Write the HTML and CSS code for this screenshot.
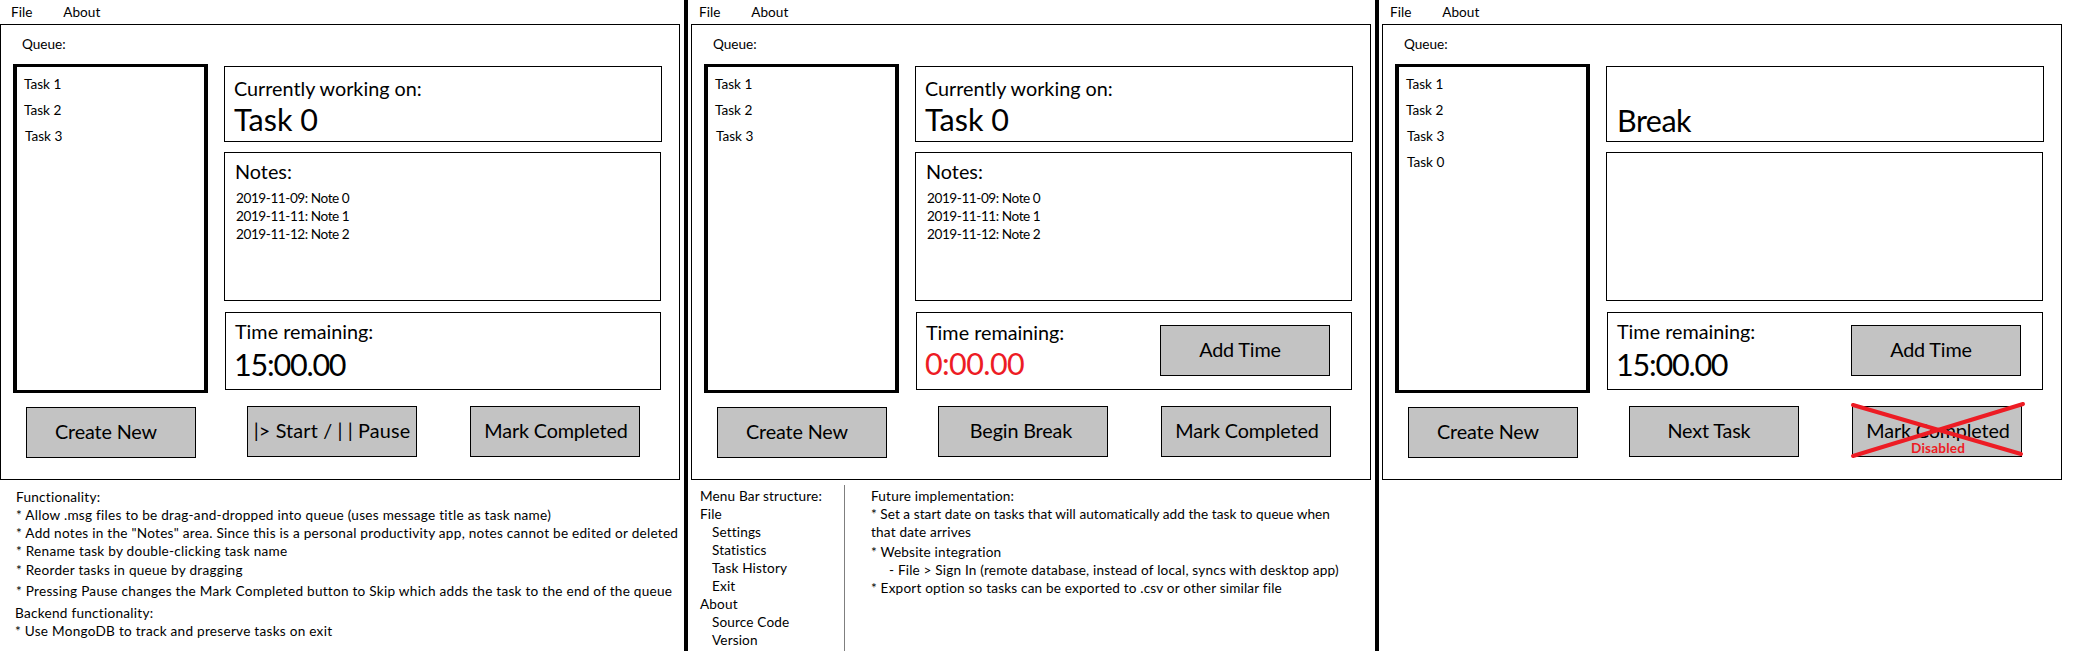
FILE: index.html
```html
<!DOCTYPE html>
<html>

<head>
    <title>Task Queue Mockups</title>
    <link rel="stylesheet" href="styles.css">
</head>

<body>
    <div class="screens">
        <!-- Running a task -->
        <div class="screen first">
            <div class="menu"><span>File</span><span class="about">About</span></div>
            <div class="frame">
                <div class="queue-label">Queue:</div>
                <div class="main">
                    <div class="queue">
                        <div class="task">Task 1</div>
                        <div class="task">Task 2</div>
                        <div class="task nudge">Task 3</div>
                    </div>
                    <div class="stack">
                        <div class="current">
                            <div class="heading">Currently working on:</div>
                            <div class="big">Task 0</div>
                        </div>
                        <div class="notes">
                            <div class="heading">Notes:</div>
                            <div class="note-list">
                                <div>2019-11-09: Note 0</div>
                                <div>2019-11-11: Note 1</div>
                                <div>2019-11-12: Note 2</div>
                            </div>
                        </div>
                        <div class="time">
                            <div>
                                <div class="heading">Time remaining:</div>
                                <div class="big digits">15:00.00</div>
                            </div>
                        </div>
                    </div>
                </div>
                <div class="actions">
                    <div class="btn create">Create New</div>
                    <div class="btn middle start">|&gt; Start / | | Pause</div>
                    <div class="btn last">Mark Completed</div>
                </div>
            </div>
            <div class="foot-one">
                <div>Functionality:</div>
                <div>* Allow .msg files to be drag-and-dropped into queue (uses message title as task name)</div>
                <div>* Add notes in the "Notes" area. Since this is a personal productivity app, notes cannot be edited or deleted</div>
                <div>* Rename task by double-clicking task name</div>
                <div class="gap1">* Reorder tasks in queue by dragging</div>
                <div class="gap3">* Pressing Pause changes the Mark Completed button to Skip which adds the task to the end of the queue</div>
                <div class="gap4 back">Backend functionality:</div>
                <div class="back">* Use MongoDB to track and preserve tasks on exit</div>
            </div>
        </div>

        <!-- Timer ran out -->
        <div class="screen">
            <div class="menu"><span>File</span><span class="about">About</span></div>
            <div class="frame">
                <div class="queue-label">Queue:</div>
                <div class="main">
                    <div class="queue">
                        <div class="task">Task 1</div>
                        <div class="task">Task 2</div>
                        <div class="task nudge">Task 3</div>
                    </div>
                    <div class="stack">
                        <div class="current">
                            <div class="heading">Currently working on:</div>
                            <div class="big">Task 0</div>
                        </div>
                        <div class="notes">
                            <div class="heading">Notes:</div>
                            <div class="note-list">
                                <div>2019-11-09: Note 0</div>
                                <div>2019-11-11: Note 1</div>
                                <div>2019-11-12: Note 2</div>
                            </div>
                        </div>
                        <div class="time">
                            <div>
                                <div class="heading">Time remaining:</div>
                                <div class="big digits expired">0:00.00</div>
                            </div>
                            <div class="btn add">Add Time</div>
                        </div>
                    </div>
                </div>
                <div class="actions">
                    <div class="btn create">Create New</div>
                    <div class="btn middle begin">Begin Break</div>
                    <div class="btn last">Mark Completed</div>
                </div>
            </div>
            <div class="foot-two">
                <div class="menu-tree">
                    <div>Menu Bar structure:</div>
                    <div>File</div>
                    <div class="sub">Settings</div>
                    <div class="sub">Statistics</div>
                    <div class="sub">Task History</div>
                    <div class="sub">Exit</div>
                    <div>About</div>
                    <div class="sub">Source Code</div>
                    <div class="sub">Version</div>
                </div>
                <div class="future">
                    <div>Future implementation:</div>
                    <div class="tight">* Set a start date on tasks that will automatically add the task to queue when</div>
                    <div>that date arrives</div>
                    <div class="gap2">* Website integration</div>
                    <div class="sub-file">- File &gt; Sign In (remote database, instead of local, syncs with desktop app)</div>
                    <div>* Export option so tasks can be exported to .csv or other similar file</div>
                </div>
            </div>
        </div>

        <!-- On a break -->
        <div class="screen final">
            <div class="menu"><span>File</span><span class="about">About</span></div>
            <div class="frame">
                <div class="queue-label">Queue:</div>
                <div class="main">
                    <div class="queue">
                        <div class="task">Task 1</div>
                        <div class="task">Task 2</div>
                        <div class="task nudge">Task 3</div>
                        <div class="task nudge">Task 0</div>
                    </div>
                    <div class="stack">
                        <div class="current">
                            <div class="heading"></div>
                            <div class="big break">Break</div>
                        </div>
                        <div class="notes"></div>
                        <div class="time">
                            <div>
                                <div class="heading">Time remaining:</div>
                                <div class="big digits">15:00.00</div>
                            </div>
                            <div class="btn add">Add Time</div>
                        </div>
                    </div>
                </div>
                <div class="actions">
                    <div class="btn create">Create New</div>
                    <div class="btn middle next">Next Task</div>
                    <div class="btn last disabled">
                        Mark Completed
                        <span class="disabled-label">Disabled</span>
                        <svg class="cross" width="170" height="51" viewBox="0 0 170 51">
                            <line x1="1" y1="-1" x2="169" y2="48" />
                            <line x1="1" y1="50" x2="171" y2="-2" />
                        </svg>
                    </div>
                </div>
            </div>
        </div>
    </div>
</body>

</html>
```

FILE: styles.css
```css
/* Page */
body {
    margin: 0;
    background: #ffffff;
    color: #000000;
    font-family: Lato, "Open Sans", sans-serif;
    font-size: 13.6px;
    line-height: 18px;
    overflow: hidden;
}

.screens {
    display: flex;
    height: 651px;
}

.screen {
    width: 684px;
    padding-left: 3px;
    border-right: 4px solid #000000;
}

.screen.first {
    padding-left: 0;
}

.screen.final {
    width: 693px;
    border-right: none;
}

/* Menu bar */
.menu {
    height: 24px;
    padding-left: 8px;
    line-height: 24px;
}

.first .menu {
    padding-left: 11px;
}

.about {
    margin-left: 31px;
}

/* Window */
.frame {
    box-sizing: border-box;
    width: 680px;
    height: 456px;
    border: 1px solid #000000;
}

.queue-label {
    padding: 10px 0 11px 21px;
}

.main {
    display: flex;
    align-items: flex-start;
    padding-left: 12px;
}

.queue {
    box-sizing: border-box;
    width: 195px;
    height: 329px;
    padding: 4px 0 0 7px;
    border: 3px solid #000000;
    border-left-width: 4px;
    border-right-width: 4px;
}

.task {
    height: 26px;
    line-height: 26px;
}

.nudge {
    margin-left: 1px;
}

.stack {
    margin: 2px 0 0 16px;
}

.current,
.notes,
.time {
    box-sizing: border-box;
    border: 1px solid #000000;
}

.current {
    width: 438px;
    height: 76px;
    padding: 9px 0 0 9px;
}

.notes {
    width: 437px;
    height: 149px;
    margin-top: 10px;
    padding: 6px 0 0 10px;
}

.time {
    display: flex;
    align-items: center;
    justify-content: space-between;
    width: 436px;
    height: 78px;
    margin: 11px 0 0 1px;
    padding: 0 21px 0 9px;
}

.heading {
    min-height: 24px;
    font-size: 19.8px;
    line-height: 24px;
}

.big {
    font-size: 30.5px;
    line-height: 38px;
}

.digits {
    margin-top: 2px;
    margin-left: -1px;
    letter-spacing: -1.2px;
}

.expired {
    margin-top: 0;
    color: #ed1c24;
    letter-spacing: -0.6px;
}

.break {
    margin: 1px 0 0 1px;
    letter-spacing: -0.5px;
}

.note-list {
    margin-top: 6px;
    margin-left: 1px;
    letter-spacing: -0.44px;
}

/* Buttons */
.actions {
    display: flex;
    align-items: flex-start;
    margin-top: 13px;
    padding-left: 25px;
}

.btn {
    position: relative;
    box-sizing: border-box;
    width: 170px;
    height: 51px;
    border: 1px solid #000000;
    background: #c3c3c3;
    font-size: 19.8px;
    letter-spacing: -0.15px;
    line-height: 47px;
    text-align: center;
    white-space: nowrap;
}

.create {
    margin-top: 1px;
    padding-right: 10px;
    line-height: 46px;
}

.middle {
    margin-left: 51px;
}

.start {
    letter-spacing: 0.15px;
}

.begin {
    padding-right: 4px;
}

.next {
    padding-right: 10px;
}

.last {
    margin-left: 53px;
    padding-left: 2px;
}

.add {
    margin-top: -1px;
    padding-right: 10px;
}

.disabled-label {
    position: absolute;
    left: 58px;
    top: 32px;
    color: #ed1c24;
    font-size: 13.6px;
    font-weight: 700;
    letter-spacing: 0.2px;
    line-height: 18px;
}

.cross {
    position: absolute;
    left: -1px;
    top: -1px;
    overflow: visible;
}

.cross line {
    stroke: #ed1c24;
    stroke-width: 4;
    stroke-linecap: round;
}

/* Notes under the windows */
.foot-one {
    padding: 8px 0 0 16px;
    letter-spacing: 0.26px;
}

.gap1 {
    margin-top: 1px;
}

.gap2 {
    margin-top: 2px;
}

.gap3 {
    margin-top: 3px;
}

.gap4 {
    margin-top: 4px;
}

.back {
    margin-left: -1px;
}

.foot-two {
    display: flex;
    height: 166px;
    margin-top: 5px;
}

.menu-tree {
    box-sizing: border-box;
    width: 154px;
    padding: 2px 0 0 9px;
    border-right: 1px solid #7f7f7f;
    letter-spacing: 0.14px;
}

.sub {
    padding-left: 12px;
}

.future {
    padding: 2px 0 0 26px;
    letter-spacing: 0.18px;
}

.tight {
    letter-spacing: 0.05px;
}

.sub-file {
    padding-left: 18px;
}
```
